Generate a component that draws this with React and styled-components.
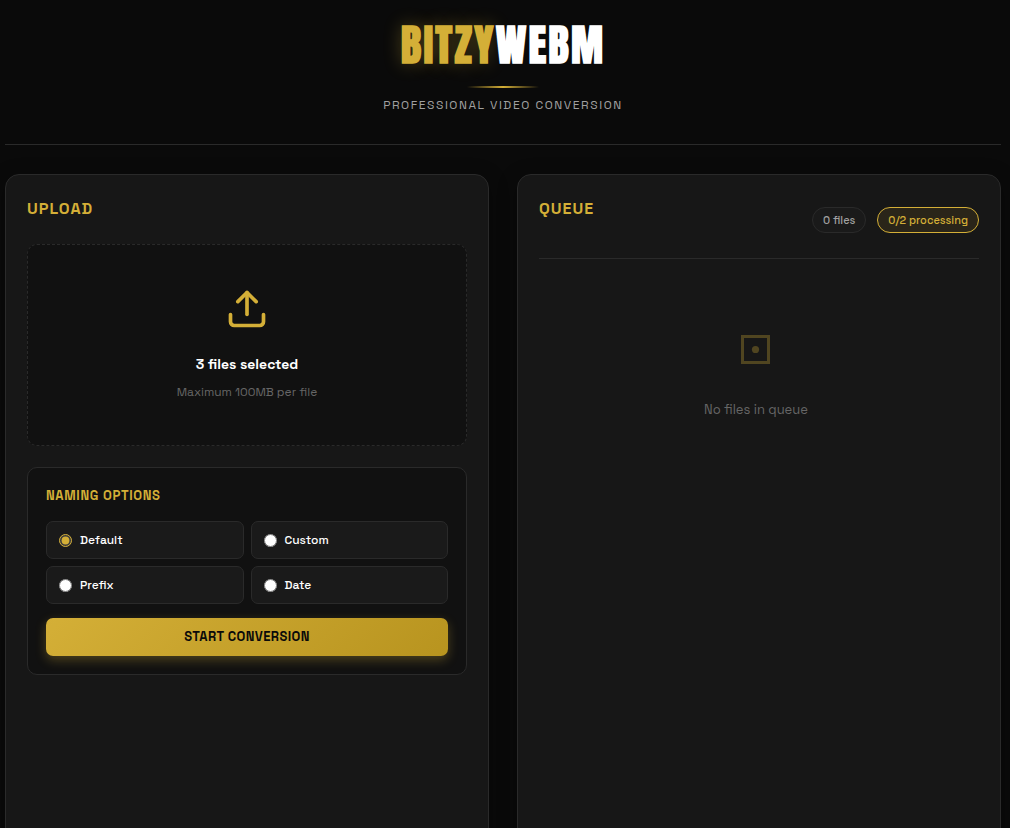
import React, { useState } from "react";
import styled, { createGlobalStyle, css } from "styled-components";

const gold = "#d4af37";
const line = "#2a2a2a";

const GlobalStyle = createGlobalStyle`
  *, *::before, *::after { box-sizing: border-box; }
  html { scrollbar-width: none; }
  body {
    margin: 0;
    background: #0a0a0a;
    color: #ffffff;
    font-family: "Space Grotesk", Inter, "Liberation Sans", sans-serif;
  }
  h1, h2, h3, p { margin: 0; }
`;

const Page = styled.div`
  min-height: 100vh;
  padding: 0 9px 24px 5px;
`;

const Header = styled.header`
  display: flex;
  flex-direction: column;
  align-items: center;
  height: 145px;
  padding-top: 15px;
  border-bottom: 1px solid ${line};
`;

const Logo = styled.h1`
  font-family: Anton, Roboto, sans-serif;
  font-size: 43px;
  line-height: 60px;
  font-weight: 900;
  letter-spacing: 0.05em;
`;

const LogoAccent = styled.span`
  color: ${gold};
  text-shadow: 0 0 18px rgba(212, 175, 55, 0.3);
`;

const Rule = styled.div`
  width: 72px;
  height: 2px;
  margin-top: 11px;
  background: linear-gradient(90deg, transparent, ${gold}, transparent);
`;

const Tagline = styled.p`
  margin-top: 8px;
  color: #a0a0a0;
  font-size: 12px;
  line-height: 18px;
  letter-spacing: 0.13em;
  text-transform: uppercase;
`;

const Columns = styled.main`
  display: grid;
  grid-template-columns: 1fr 1fr;
  gap: 28px;
  margin-top: 29px;
`;

const Panel = styled.section`
  min-height: 90vh;
  padding: 21px;
  background: #171717;
  border: 1px solid ${line};
  border-radius: 14px;
  box-shadow: 0 4px 20px rgba(0, 0, 0, 0.3);
`;

const PanelTitle = styled.h2`
  color: ${gold};
  font-size: 16px;
  line-height: 26px;
  font-weight: 600;
  letter-spacing: 1px;
  text-transform: uppercase;
`;

const DropZone = styled.button`
  display: flex;
  flex-direction: column;
  align-items: center;
  width: 100%;
  height: 202px;
  margin-top: 22px;
  padding: 42px 20px;
  background: #111111;
  border: 1px dashed ${line};
  border-radius: 10px;
  color: #ffffff;
  font-family: inherit;
  cursor: pointer;
`;

const UploadIcon = styled.svg`
  width: 44px;
  height: 44px;
  color: ${gold};
`;

const DropTitle = styled.span`
  margin-top: 21px;
  font-size: 14px;
  line-height: 24px;
  font-weight: 600;
`;

const DropHint = styled.span`
  margin-top: 6px;
  color: #666666;
  font-size: 12px;
  line-height: 20px;
`;

const Options = styled.form`
  margin-top: 21px;
  padding: 18px;
  background: #111111;
  border: 1px solid ${line};
  border-radius: 10px;
`;

const OptionsTitle = styled.h3`
  color: ${gold};
  font-size: 13px;
  line-height: 20px;
  font-weight: 600;
  letter-spacing: 0.05em;
  text-transform: uppercase;
`;

const OptionGrid = styled.div`
  display: grid;
  grid-template-columns: 1fr 1fr;
  gap: 7px;
  margin-top: 15px;
`;

const Option = styled.label`
  display: flex;
  align-items: center;
  gap: 8px;
  height: 38px;
  padding: 0 12px;
  background: #1a1a1a;
  border: 1px solid ${line};
  border-radius: 7px;
  font-size: 12px;
  font-weight: 500;
  cursor: pointer;
`;

const Radio = styled.input`
  width: 13px;
  height: 13px;
  margin: 0;
  accent-color: ${gold};
`;

const StartButton = styled.button`
  display: block;
  width: 100%;
  height: 38px;
  margin-top: 14px;
  padding: 0 0 2px;
  border: 0;
  border-radius: 7px;
  background: linear-gradient(135deg, ${gold}, #b8941f);
  box-shadow: 0 4px 11px rgba(212, 175, 55, 0.3);
  color: #0a0a0a;
  font-family: inherit;
  font-size: 13px;
  font-weight: 600;
  letter-spacing: 0.03em;
  text-transform: uppercase;
  cursor: pointer;
`;

const QueueHeader = styled.div`
  display: flex;
  align-items: flex-start;
  justify-content: space-between;
  padding-bottom: 25px;
  border-bottom: 1px solid ${line};
`;

const Badges = styled.div`
  display: flex;
  gap: 11px;
  padding-top: 11px;
`;

const Badge = styled.span`
  height: 26px;
  padding: 0 10px;
  border: 1px solid ${line};
  border-radius: 13px;
  background: #1a1a1a;
  color: #a0a0a0;
  font-size: 11px;
  line-height: 24px;
  font-weight: 500;
  ${(p) => p.$active && css`
    border-color: ${gold};
    background: #2a2519;
    color: ${gold};
  `}
`;

const Empty = styled.div`
  display: flex;
  flex-direction: column;
  align-items: center;
  padding: 76px 6px 0 0;
`;

const EmptyIcon = styled.svg`
  width: 30px;
  height: 30px;
  color: ${gold};
  opacity: 0.3;
`;

const EmptyText = styled.p`
  margin-top: 35px;
  color: #666666;
  font-size: 13px;
  line-height: 20px;
`;

const namingModes = ["Default", "Custom", "Prefix", "Date"];

export default function App() {
  const [mode, setMode] = useState("Default");
  return (
    <>
      <GlobalStyle />
      <Page>
        <Header>
          <Logo><LogoAccent>BITZY</LogoAccent>WEBM</Logo>
          <Rule />
          <Tagline>Professional Video Conversion</Tagline>
        </Header>
        <Columns>
          <Panel>
            <PanelTitle>Upload</PanelTitle>
            <DropZone type="button">
              <UploadIcon viewBox="0 0 24 24" fill="none" stroke="currentColor" strokeWidth="2" strokeLinecap="round" strokeLinejoin="round" aria-hidden="true">
                <path d="M21 15v4a2 2 0 0 1-2 2H5a2 2 0 0 1-2-2v-4" />
                <path d="M17 8l-5-5-5 5" />
                <path d="M12 3v12" />
              </UploadIcon>
              <DropTitle>3 files selected</DropTitle>
              <DropHint>Maximum 100MB per file</DropHint>
            </DropZone>
            <Options onSubmit={(e) => e.preventDefault()}>
              <OptionsTitle>Naming Options</OptionsTitle>
              <OptionGrid>
                {namingModes.map((name) => (
                  <Option key={name}>
                    <Radio type="radio" name="naming" checked={mode === name} onChange={() => setMode(name)} />
                    {name}
                  </Option>
                ))}
              </OptionGrid>
              <StartButton type="submit">Start Conversion</StartButton>
            </Options>
          </Panel>
          <Panel>
            <QueueHeader>
              <PanelTitle>Queue</PanelTitle>
              <Badges>
                <Badge>0 files</Badge>
                <Badge $active>0/2 processing</Badge>
              </Badges>
            </QueueHeader>
            <Empty>
              <EmptyIcon viewBox="0 0 30 30" aria-hidden="true">
                <rect x="1.5" y="1.5" width="26" height="26" fill="none" stroke="currentColor" strokeWidth="3" />
                <circle cx="14.5" cy="14.5" r="3.6" fill="currentColor" />
              </EmptyIcon>
              <EmptyText>No files in queue</EmptyText>
            </Empty>
          </Panel>
        </Columns>
      </Page>
    </>
  );
}
